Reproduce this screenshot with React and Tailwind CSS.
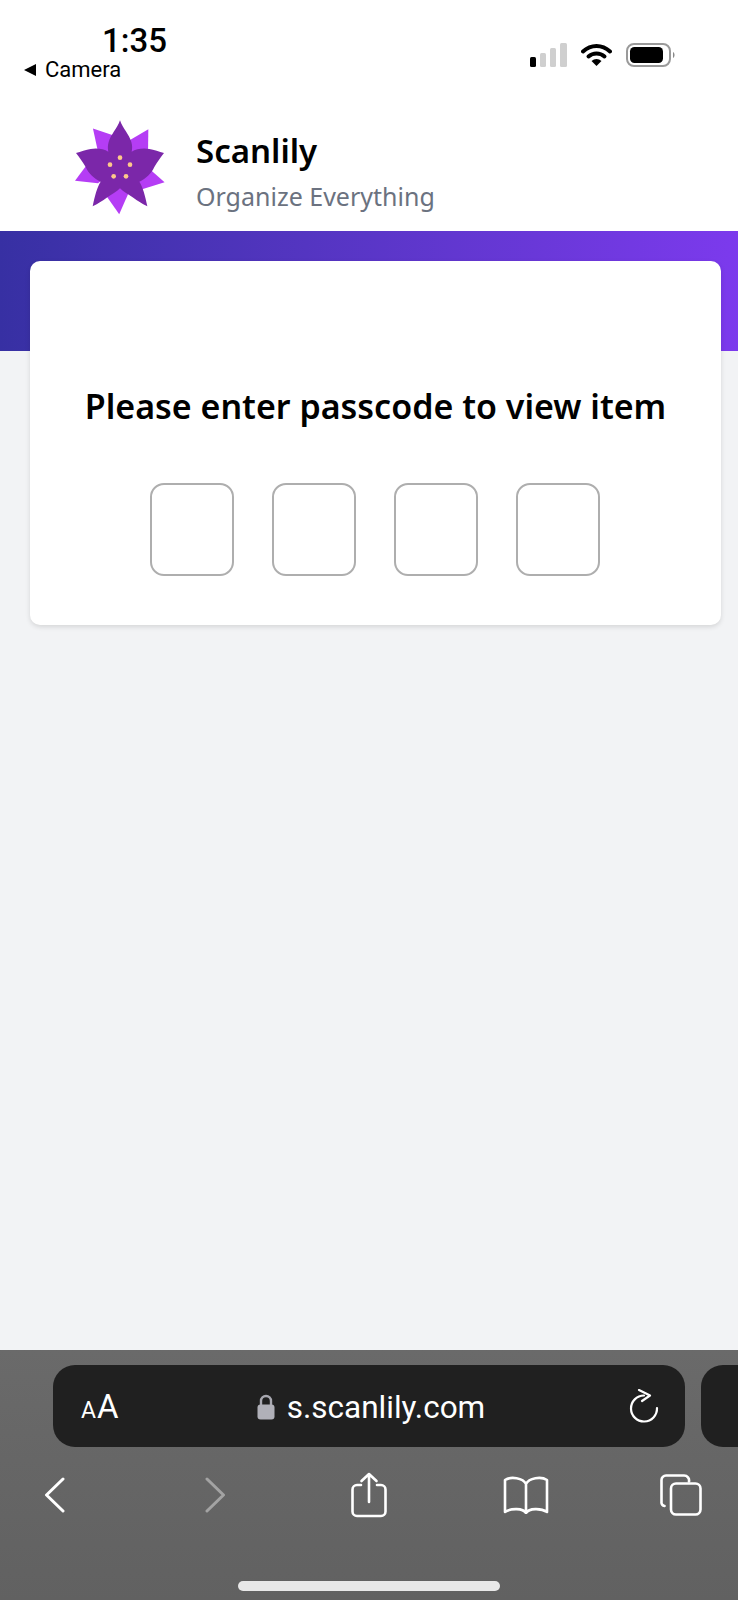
import React from "react";

const ROT5 = [0, 72, 144, 216, 288];

function Logo() {
  return (
    <svg width="90" height="99" viewBox="45 20 270 297" className="block">
      {ROT5.map((r) => (
        <polygon key={r} points="205,92 265,57 264,130 180,170" fill="#b53df5" transform={`rotate(${r} 180 170)`} />
      ))}
      <path
        d="M180 30 C188 55 208 72 214 95 C217 105 217 115 215 124 C228 116 250 112 268 116 C282 119 298 124 312 128 C302 140 292 155 283 170 C275 188 258 205 238 214 C248 228 256 258 262 288 C245 278 232 272 220 262 C205 252 190 245 180 234 C170 245 155 252 140 262 C128 272 115 278 98 288 C104 258 112 228 122 214 C102 205 85 188 77 170 C68 155 58 140 48 128 C62 124 78 119 92 116 C110 112 132 116 145 124 C143 115 143 105 146 95 C152 72 172 55 180 30 Z"
        fill="#7b27a9"
      />
      {[[180, 142], [210, 163], [198, 198], [161, 198], [150, 163]].map(([x, y]) => (
        <circle key={x} cx={x} cy={y} r="7" fill="#fdc98a" />
      ))}
    </svg>
  );
}

function StatusIcons() {
  return (
    <div className="flex items-start gap-[14px]">
      <svg width="37" height="24" viewBox="0 0 37 24" className="block">
        <rect x="0" y="14" width="6" height="10" rx="1.5" fill="#000" />
        <rect x="10" y="10" width="6" height="14" rx="1.5" fill="#cfcfcf" />
        <rect x="20" y="5" width="6" height="19" rx="1.5" fill="#cfcfcf" />
        <rect x="30" y="0" width="7" height="24" rx="1.5" fill="#cfcfcf" />
      </svg>
      <svg width="31" height="23" viewBox="0 0 31 23" className="block">
        <path d="M2 8.5 C10 1 21 1 29 8.5" fill="none" stroke="#000" strokeWidth="4" strokeLinecap="round" />
        <path d="M7.5 13.5 C12 9.5 19 9.5 23.5 13.5" fill="none" stroke="#000" strokeWidth="4" strokeLinecap="round" />
        <path d="M10.5 18 C13.5 15.2 17.5 15.2 20.5 18 L15.5 23 Z" fill="#000" />
      </svg>
      <svg width="50" height="24" viewBox="0 0 50 24" className="block">
        <rect x="1" y="1" width="43" height="22" rx="7" fill="none" stroke="#9a9a9a" strokeWidth="2" />
        <rect x="4" y="4" width="33" height="16" rx="4.5" fill="#000" />
        <path d="M47 9 C49 10 49 14 47 15 Z" fill="#8a8a8a" />
      </svg>
    </div>
  );
}

function SafariBar() {
  return (
    <div className="mt-auto flex h-[250px] flex-col bg-gradient-to-b from-[#6a6a6a] to-[#616161] pt-[15px]">
      <div className="flex items-stretch overflow-hidden pl-[53px]">
        <div className="flex h-[82px] w-[632px] shrink-0 items-center justify-between rounded-[22px] bg-[#202020] pl-[28px] pr-[26px]">
          <div className="flex w-[38px] items-baseline gap-[1px] whitespace-nowrap text-white font-['Roboto',sans-serif]">
            <span className="text-[23px] leading-none">A</span>
            <span className="text-[33px] leading-none">A</span>
          </div>
          <div className="mr-[6px] flex items-center gap-[12px] pt-[1px]">
            <svg width="18" height="26" viewBox="0 0 18 26" className="block">
              <path d="M4 12 V7 A5 5 0 0 1 14 7 V12" fill="none" stroke="#a8a8b0" strokeWidth="2.4" />
              <rect x="0.5" y="10.5" width="17" height="15" rx="3" fill="#b0b0b8" />
            </svg>
            <span className="pt-[2px] text-[31.5px] leading-none text-white font-['Roboto',sans-serif]">s.scanlily.com</span>
          </div>
          <svg width="30" height="34" viewBox="0 0 30 34" className="block" fill="none" stroke="#fff" strokeWidth="2.2" strokeLinecap="round" strokeLinejoin="round">
            <path d="M15 6.5 A13 13 0 1 0 28 19" />
            <path d="M10 1 L21 6.5 L13 12" />
          </svg>
        </div>
        <div className="ml-[16px] h-[82px] w-[80px] shrink-0 rounded-[22px] bg-[#202020]" />
      </div>
      <div className="mt-[25px] flex h-[46px] items-center pl-[44px]">
        <svg width="21" height="36" viewBox="0 0 21 36" className="block" fill="none" stroke="#fff" strokeWidth="3" strokeLinecap="round" strokeLinejoin="round">
          <path d="M19 2 L2.5 18 L19 34" />
        </svg>
        <svg width="21" height="36" viewBox="0 0 21 36" className="ml-[140px] block" fill="none" stroke="#a3a3a3" strokeWidth="3" strokeLinecap="round" strokeLinejoin="round">
          <path d="M2 2 L18.5 18 L2 34" />
        </svg>
        <svg width="36" height="46" viewBox="0 0 36 46" className="ml-[125px] block" fill="none" stroke="#fff" strokeWidth="2.6" strokeLinecap="round" strokeLinejoin="round">
          <path d="M10 13 H6 A4.5 4.5 0 0 0 1.5 17.5 V39.5 A4.5 4.5 0 0 0 6 44 H30 A4.5 4.5 0 0 0 34.5 39.5 V17.5 A4.5 4.5 0 0 0 30 13 H26" />
          <path d="M18 30 V2 M10.5 9 L18 2 L25.5 9" />
        </svg>
        <svg width="46" height="38" viewBox="0 0 46 38" className="ml-[116px] block" fill="none" stroke="#fff" strokeWidth="2.6" strokeLinecap="round" strokeLinejoin="round">
          <path d="M23 8 C20 2 8 0 2 4 V36 C8 32 20 32 23 37 C26 32 38 32 44 36 V4 C38 0 26 2 23 8 Z M23 8 V37" />
        </svg>
        <svg width="42" height="42" viewBox="0 0 42 42" className="ml-[111px] block" fill="none" stroke="#fff" strokeWidth="2.6" strokeLinecap="round" strokeLinejoin="round">
          <path d="M4.5 32 A3.5 3.5 0 0 1 1.5 28 V6 A4.5 4.5 0 0 1 6 1.5 H24 A5 5 0 0 1 29 7.5" />
          <rect x="11" y="9.5" width="29.5" height="31" rx="5" />
        </svg>
      </div>
      <div className="mx-auto mt-[63px] h-[10px] w-[262px] rounded-full bg-[#e8e8e8]" />
    </div>
  );
}

export default function App() {
  return (
    <div className="flex min-h-[1600px] w-[738px] flex-col bg-[#f2f3f5] font-['Noto_Sans',sans-serif]">
      <div className="h-[231px] bg-white">
        <div className="flex items-start justify-between pl-[24px] pr-[62px] pt-[24px]">
          <div className="w-[110px]">
            <div className="ml-[78px] text-[33px] font-medium leading-[34px] text-black font-['Roboto',sans-serif]">1:35</div>
            <div className="flex items-center gap-[9px] text-black font-['Roboto',sans-serif]">
              <svg width="12" height="12" viewBox="0 0 12 12" className="block shrink-0"><path d="M12 0 V12 L0 6 Z" fill="#000" /></svg>
              <span className="whitespace-nowrap text-[22px] leading-[24px]">Camera</span>
            </div>
          </div>
          <div className="pt-[19px]"><StatusIcons /></div>
        </div>
        <div className="mt-[35px] flex items-start pl-[75px]">
          <Logo />
          <div className="ml-[31px] pt-[14px]">
            <div className="text-[33px] font-semibold leading-[40px] text-black">Scanlily</div>
            <div className="mt-[8px] text-[25px] leading-[34px] text-[#6b7280]">Organize Everything</div>
          </div>
        </div>
      </div>
      <div className="h-[120px] bg-gradient-to-r from-[#3730a3] to-[#7c3aed]" />
      <div className="-mt-[90px] ml-[30px] mr-[17px] flex h-[364px] flex-col items-center rounded-[10px] bg-white pt-[123px] shadow-[0_2px_5px_rgba(0,0,0,0.12)]">
        <h1 className="whitespace-nowrap text-[34px] font-semibold leading-[44px] text-black">Please enter passcode to view item</h1>
        <div className="mr-[1px] mt-[55px] flex gap-[38px]">
          <div className="h-[93px] w-[84px] rounded-[14px] border-2 border-[#aeaeae]" />
          <div className="h-[93px] w-[84px] rounded-[14px] border-2 border-[#aeaeae]" />
          <div className="h-[93px] w-[84px] rounded-[14px] border-2 border-[#aeaeae]" />
          <div className="h-[93px] w-[84px] rounded-[14px] border-2 border-[#aeaeae]" />
        </div>
      </div>
      <SafariBar />
    </div>
  );
}
